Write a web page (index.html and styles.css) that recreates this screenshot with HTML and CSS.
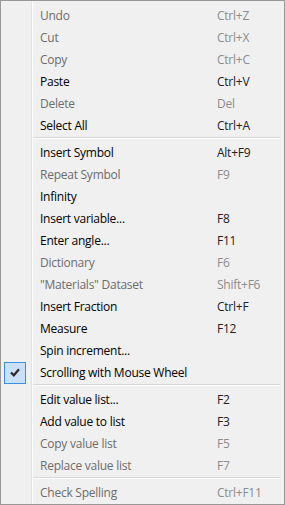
FILE: index.html
```html
<!DOCTYPE html>
<html lang="en">
<head>
    <meta charset="UTF-8">
    <meta name="viewport" content="width=device-width, initial-scale=1.0">
    <title>Context Menu</title>
    <link rel="stylesheet" href="styles.css">
</head>
<body>
    <div class="menu">
        <div class="item disabled"><span class="check"></span><span class="label">Undo</span><span class="key">Ctrl+Z</span></div>
        <div class="item disabled"><span class="check"></span><span class="label">Cut</span><span class="key">Ctrl+X</span></div>
        <div class="item disabled"><span class="check"></span><span class="label">Copy</span><span class="key">Ctrl+C</span></div>
        <div class="item"><span class="check"></span><span class="label">Paste</span><span class="key">Ctrl+V</span></div>
        <div class="item disabled"><span class="check"></span><span class="label">Delete</span><span class="key">Del</span></div>
        <div class="item"><span class="check"></span><span class="label">Select All</span><span class="key">Ctrl+A</span></div>
        <div class="separator"></div>

        <div class="item"><span class="check"></span><span class="label">Insert Symbol</span><span class="key">Alt+F9</span></div>
        <div class="item disabled"><span class="check"></span><span class="label">Repeat Symbol</span><span class="key">F9</span></div>
        <div class="item"><span class="check"></span><span class="label">Infinity</span><span class="key"></span></div>
        <div class="item"><span class="check"></span><span class="label">Insert variable...</span><span class="key">F8</span></div>
        <div class="item"><span class="check"></span><span class="label">Enter angle...</span><span class="key">F11</span></div>
        <div class="item disabled"><span class="check"></span><span class="label">Dictionary</span><span class="key">F6</span></div>
        <div class="item disabled"><span class="check"></span><span class="label">"Materials" Dataset</span><span class="key">Shift+F6</span></div>
        <div class="item"><span class="check"></span><span class="label">Insert Fraction</span><span class="key">Ctrl+F</span></div>
        <div class="item"><span class="check"></span><span class="label">Measure</span><span class="key">F12</span></div>
        <div class="item"><span class="check"></span><span class="label">Spin increment...</span><span class="key"></span></div>
        <div class="item checked">
            <span class="check">
                <svg width="10" height="9" viewBox="0 0 10 9">
                    <path d="M1 4.5 L3.8 7.3 L9 1.2" fill="none" stroke="#2b2b2b" stroke-width="2.2"/>
                </svg>
            </span>
            <span class="label">Scrolling with Mouse Wheel</span><span class="key"></span>
        </div>
        <div class="separator"></div>

        <div class="item"><span class="check"></span><span class="label">Edit value list...</span><span class="key">F2</span></div>
        <div class="item"><span class="check"></span><span class="label">Add value to list</span><span class="key">F3</span></div>
        <div class="item disabled"><span class="check"></span><span class="label">Copy value list</span><span class="key">F5</span></div>
        <div class="item disabled"><span class="check"></span><span class="label">Replace value list</span><span class="key">F7</span></div>
        <div class="separator"></div>

        <div class="item disabled"><span class="check"></span><span class="label">Check Spelling</span><span class="key">Ctrl+F11</span></div>
    </div>
</body>
</html>
```

FILE: styles.css
```css
body {
    margin: 0;
    padding: 0;
    font-family: 'Open Sans', 'Noto Sans', sans-serif;
    font-size: 12px;
    letter-spacing: -0.25px;
}

.menu {
    box-sizing: border-box;
    width: 285px;
    height: 505px;
    border: 1px solid #979797;
    padding: 3px 2px 1px 2px;
    background: linear-gradient(to right,
        #f0f0f0 0, #f0f0f0 30px,
        #e2e3e3 30px, #e2e3e3 31px,
        #ffffff 31px, #ffffff 32px,
        #f0f0f0 32px);
    display: flex;
    flex-direction: column;
}

.item {
    display: grid;
    grid-template-columns: 37px 177px 1fr;
    align-items: center;
    height: 22px;
    color: #000000;
}

.item.disabled {
    color: #6d6d6d;
}

.item.disabled .key {
    color: #8c8c8c;
}

.label,
.key {
    white-space: nowrap;
    line-height: 23px;
}

.key {
    color: #222222;
}

.check {
    box-sizing: border-box;
    width: 22px;
    height: 22px;
    margin-left: 1px;
    display: flex;
    align-items: center;
    justify-content: center;
}

.checked .check {
    background-color: #c9e0f7;
    border: 1px solid #3a8fde;
}

.separator {
    height: 5px;
    box-sizing: border-box;
    margin-left: 30px;
    margin-right: 2px;
    padding-top: 1px;
}

.separator::after {
    content: "";
    display: block;
    height: 1px;
    background-color: #d7d7d7;
    border-bottom: 1px solid #ffffff;
}
```
